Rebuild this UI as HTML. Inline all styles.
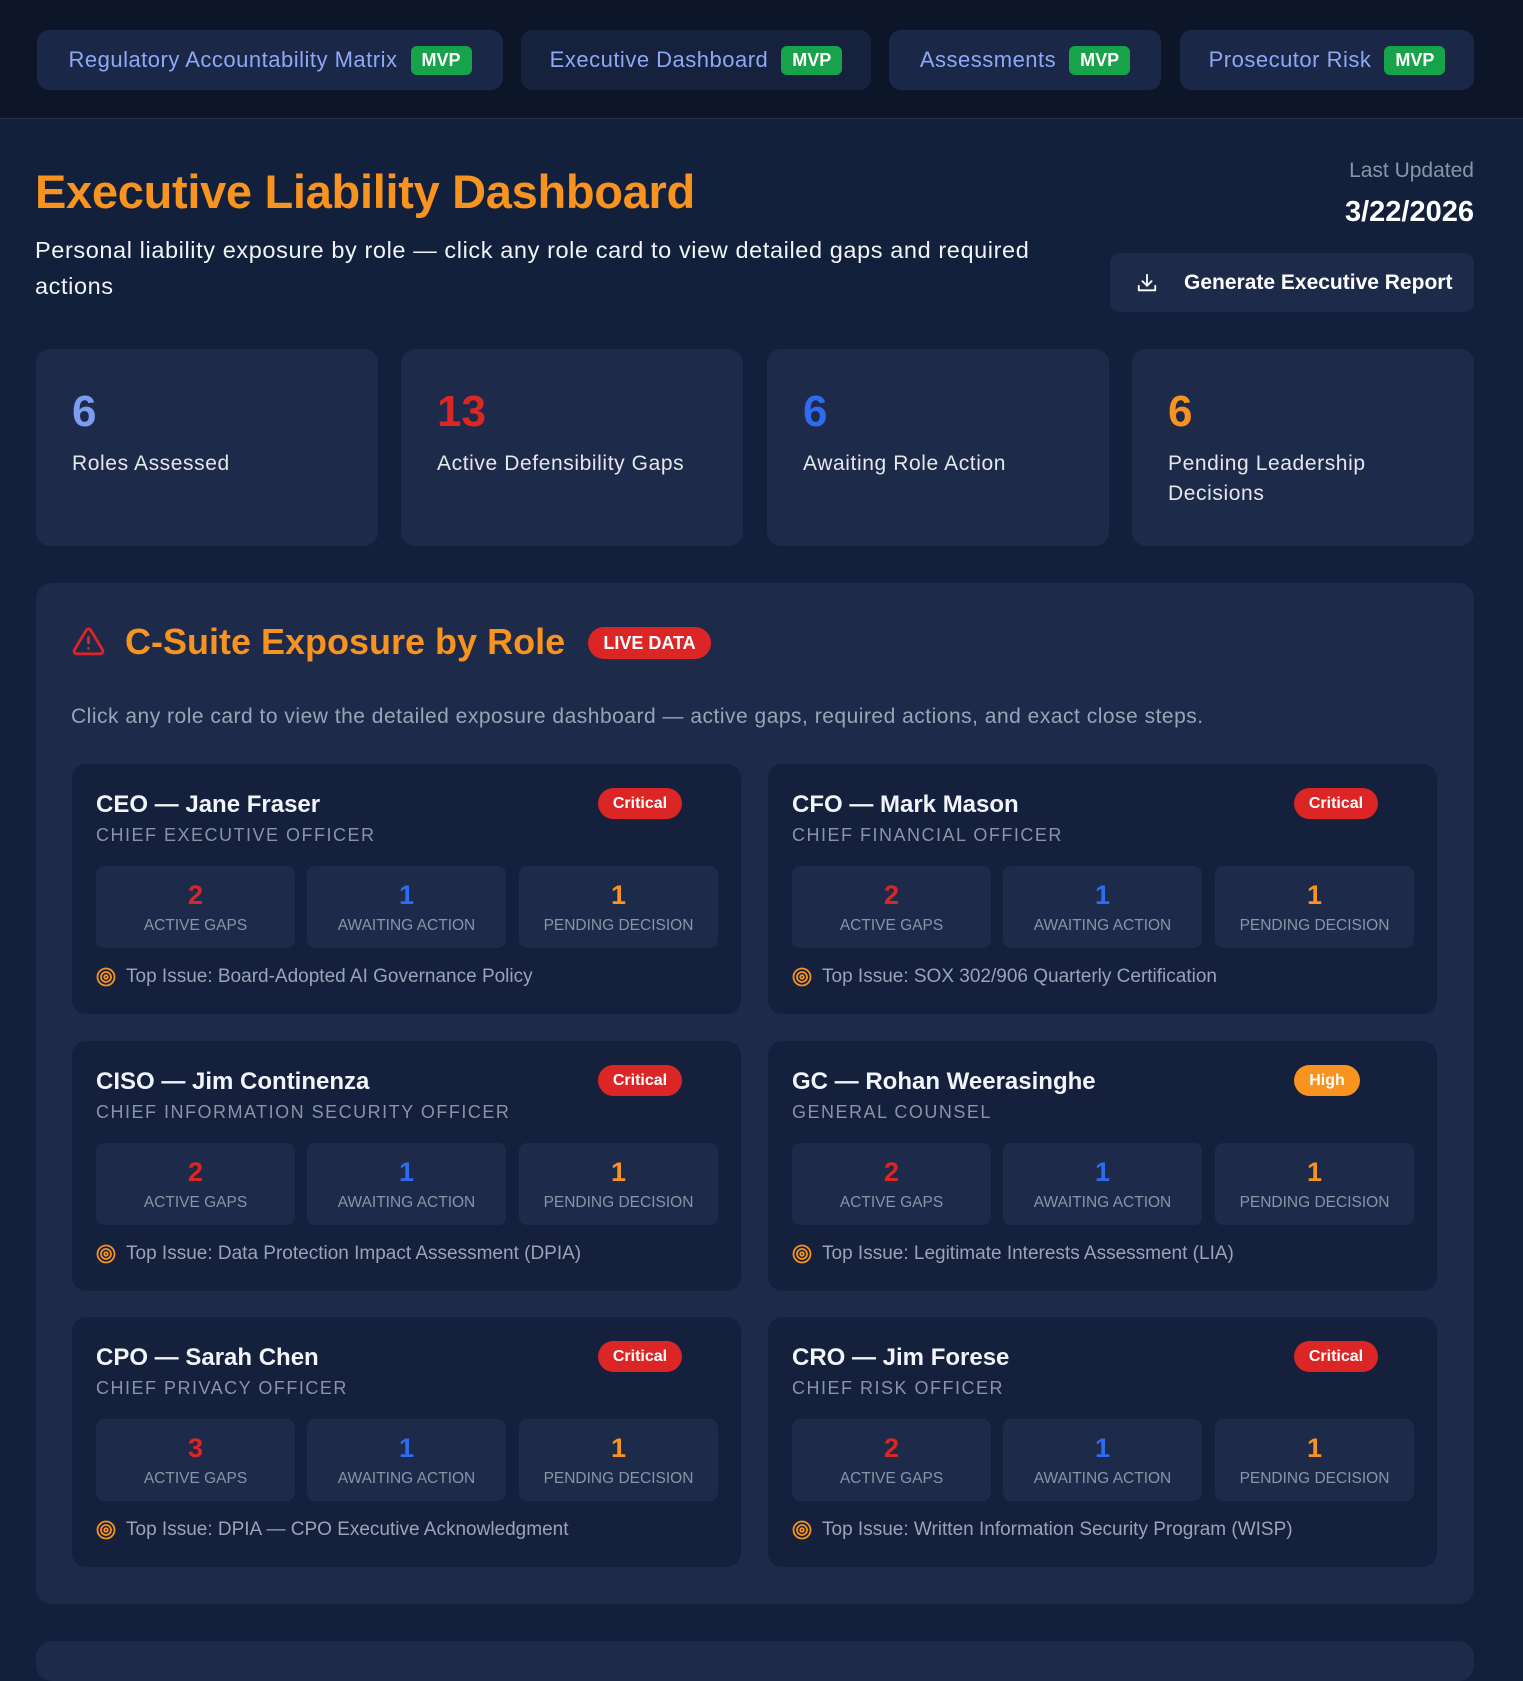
<!DOCTYPE html>
<html><head><meta charset="utf-8">
<style>
*{box-sizing:border-box;margin:0;padding:0}
body{width:1523px;height:1655px;background:#13203b;font-family:"Liberation Sans",sans-serif;position:relative;overflow:hidden;color:#e5e7eb}
.abs{position:absolute}
.hdr{left:0;top:0;width:1523px;height:119px;background:#0d1529;border-bottom:1px solid #253149}
.pill{top:30px;height:60px;border-radius:12px;background:#1b2747;display:flex;align-items:center;justify-content:center;font-size:22px;letter-spacing:0.5px;color:#8fa8f5}
.pill.b{background:#15213d}
.mvp{background:#17a34a;color:#fff;font-weight:bold;font-size:18px;letter-spacing:0;border-radius:6px;padding:4px 11px;margin-left:13px}
.stat{top:349px;height:197px;width:342px;border-radius:14px;background:#1e2a4a}
.stat .n{position:absolute;left:36px;top:38px;font-size:44px;font-weight:bold}
.stat .l{position:absolute;left:36px;top:100px;font-size:21px;letter-spacing:0.6px;color:#e5e7eb;line-height:30px}
.panel{left:36px;top:583px;width:1438px;height:1021px;border-radius:16px;background:#1e2a4a}
.card{width:669px;height:250px;border-radius:14px;background:#14203c}
.card .nm{position:absolute;left:24px;top:27px;font-size:24px;font-weight:bold;color:#f1f5f9}
.card .sub{position:absolute;left:24px;top:61px;font-size:18px;color:#8a94a6;letter-spacing:1.5px}
.card .bd{position:absolute;left:526px;top:24px;width:84px;height:31px;border-radius:16px;background:#dc2626;color:#fff;font-weight:bold;font-size:16px;text-align:center;line-height:31px}
.card .bx{position:absolute;top:102px;width:199px;height:82px;border-radius:8px;background:#1e2a4a;text-align:center}
.bx .v{font-size:27px;font-weight:bold;margin-top:13px;line-height:32px}
.bx .t{font-size:15.5px;color:#8a94a6;margin-top:6px}
.card .ti{position:absolute;left:24px;top:202px;font-size:19px;color:#9aa4b6;display:flex;align-items:center}
.ti svg{margin-right:10px}
</style></head><body>
<div class="abs hdr"></div>
<div class="abs pill" style="left:37px;width:466px">Regulatory Accountability Matrix<span class="mvp">MVP</span></div>
<div class="abs pill b" style="left:521px;width:350px">Executive Dashboard<span class="mvp">MVP</span></div>
<div class="abs pill" style="left:889px;width:272px">Assessments<span class="mvp">MVP</span></div>
<div class="abs pill" style="left:1180px;width:294px">Prosecutor Risk<span class="mvp">MVP</span></div>

<div class="abs" style="left:35px;top:164px;font-size:47px;font-weight:bold;color:#f7931e;letter-spacing:-0.3px">Executive Liability Dashboard</div>
<div class="abs" style="left:35px;top:232px;width:1070px;font-size:23.5px;letter-spacing:0.6px;line-height:36px;color:#f1f5f9">Personal liability exposure by role — click any role card to view detailed gaps and required actions</div>
<div class="abs" style="right:49px;top:159px;font-size:21px;color:#8a94a6">Last Updated</div>
<div class="abs" style="right:49px;top:196px;font-size:29px;font-weight:bold;color:#fff">3/22/2026</div>
<div class="abs" style="left:1110px;top:253px;width:364px;height:59px;border-radius:10px;background:#1e2a4a;display:flex;align-items:center;padding-left:26px;font-size:21px;font-weight:bold;color:#fff">
<svg width="22" height="22" viewBox="0 0 24 24" fill="none" stroke="#fff" stroke-width="2" stroke-linecap="round" stroke-linejoin="round" style="margin-right:26px"><path d="M3 15v5h18v-5"/><path d="M12 3v12"/><path d="M7 10l5 5 5-5"/></svg>Generate Executive Report</div>

<div class="abs stat" style="left:36px"><div class="n" style="color:#7c9cf0">6</div><div class="l">Roles Assessed</div></div>
<div class="abs stat" style="left:401px"><div class="n" style="color:#dc2626">13</div><div class="l">Active Defensibility Gaps</div></div>
<div class="abs stat" style="left:767px"><div class="n" style="color:#2f6bf0">6</div><div class="l">Awaiting Role Action</div></div>
<div class="abs stat" style="left:1132px"><div class="n" style="color:#f7931e">6</div><div class="l">Pending Leadership<br>Decisions</div></div>

<div class="abs panel"></div>
<svg class="abs" style="left:71px;top:625px" width="35" height="33" viewBox="0 0 24 24" fill="none" stroke="#dc2626" stroke-width="2" stroke-linecap="round" stroke-linejoin="round"><path d="M10.3 3.9L1.8 18a2 2 0 0 0 1.7 3h17a2 2 0 0 0 1.7-3L13.7 3.9a2 2 0 0 0-3.4 0z"/><path d="M12 9v4"/><path d="M12 17h.01"/></svg>
<div class="abs" style="left:125px;top:621px;font-size:36px;font-weight:bold;color:#f7931e">C-Suite Exposure by Role</div>
<div class="abs" style="left:588px;top:627px;width:123px;height:32px;border-radius:16px;background:#dc2626;color:#fff;font-weight:bold;font-size:18px;text-align:center;line-height:32px">LIVE DATA</div>
<div class="abs" style="left:71px;top:705px;font-size:21px;letter-spacing:0.5px;color:#9aa4b6">Click any role card to view the detailed exposure dashboard — active gaps, required actions, and exact close steps.</div>

<!-- cards -->
<div class="abs card" style="left:72px;top:764px"><div class="nm">CEO — Jane Fraser</div><div class="sub">CHIEF EXECUTIVE OFFICER</div><div class="bd">Critical</div>
<div class="bx" style="left:24px"><div class="v" style="color:#dc2626">2</div><div class="t">ACTIVE GAPS</div></div>
<div class="bx" style="left:235px"><div class="v" style="color:#2f6bf0">1</div><div class="t">AWAITING ACTION</div></div>
<div class="bx" style="left:447px"><div class="v" style="color:#f7931e">1</div><div class="t">PENDING DECISION</div></div>
<div class="ti"><svg width="20" height="20" viewBox="0 0 20 20" fill="none" stroke="#f7931e" stroke-width="1.8"><circle cx="10" cy="10" r="8.5"/><circle cx="10" cy="10" r="5"/><circle cx="10" cy="10" r="1.8"/></svg>Top Issue: Board-Adopted AI Governance Policy</div></div>

<div class="abs card" style="left:768px;top:764px"><div class="nm">CFO — Mark Mason</div><div class="sub">CHIEF FINANCIAL OFFICER</div><div class="bd">Critical</div>
<div class="bx" style="left:24px"><div class="v" style="color:#dc2626">2</div><div class="t">ACTIVE GAPS</div></div>
<div class="bx" style="left:235px"><div class="v" style="color:#2f6bf0">1</div><div class="t">AWAITING ACTION</div></div>
<div class="bx" style="left:447px"><div class="v" style="color:#f7931e">1</div><div class="t">PENDING DECISION</div></div>
<div class="ti"><svg width="20" height="20" viewBox="0 0 20 20" fill="none" stroke="#f7931e" stroke-width="1.8"><circle cx="10" cy="10" r="8.5"/><circle cx="10" cy="10" r="5"/><circle cx="10" cy="10" r="1.8"/></svg>Top Issue: SOX 302/906 Quarterly Certification</div></div>

<div class="abs card" style="left:72px;top:1041px"><div class="nm">CISO — Jim Continenza</div><div class="sub">CHIEF INFORMATION SECURITY OFFICER</div><div class="bd">Critical</div>
<div class="bx" style="left:24px"><div class="v" style="color:#dc2626">2</div><div class="t">ACTIVE GAPS</div></div>
<div class="bx" style="left:235px"><div class="v" style="color:#2f6bf0">1</div><div class="t">AWAITING ACTION</div></div>
<div class="bx" style="left:447px"><div class="v" style="color:#f7931e">1</div><div class="t">PENDING DECISION</div></div>
<div class="ti"><svg width="20" height="20" viewBox="0 0 20 20" fill="none" stroke="#f7931e" stroke-width="1.8"><circle cx="10" cy="10" r="8.5"/><circle cx="10" cy="10" r="5"/><circle cx="10" cy="10" r="1.8"/></svg>Top Issue: Data Protection Impact Assessment (DPIA)</div></div>

<div class="abs card" style="left:768px;top:1041px"><div class="nm">GC — Rohan Weerasinghe</div><div class="sub">GENERAL COUNSEL</div><div class="bd" style="background:#f7931e;width:66px">High</div>
<div class="bx" style="left:24px"><div class="v" style="color:#dc2626">2</div><div class="t">ACTIVE GAPS</div></div>
<div class="bx" style="left:235px"><div class="v" style="color:#2f6bf0">1</div><div class="t">AWAITING ACTION</div></div>
<div class="bx" style="left:447px"><div class="v" style="color:#f7931e">1</div><div class="t">PENDING DECISION</div></div>
<div class="ti"><svg width="20" height="20" viewBox="0 0 20 20" fill="none" stroke="#f7931e" stroke-width="1.8"><circle cx="10" cy="10" r="8.5"/><circle cx="10" cy="10" r="5"/><circle cx="10" cy="10" r="1.8"/></svg>Top Issue: Legitimate Interests Assessment (LIA)</div></div>

<div class="abs card" style="left:72px;top:1317px"><div class="nm">CPO — Sarah Chen</div><div class="sub">CHIEF PRIVACY OFFICER</div><div class="bd">Critical</div>
<div class="bx" style="left:24px"><div class="v" style="color:#dc2626">3</div><div class="t">ACTIVE GAPS</div></div>
<div class="bx" style="left:235px"><div class="v" style="color:#2f6bf0">1</div><div class="t">AWAITING ACTION</div></div>
<div class="bx" style="left:447px"><div class="v" style="color:#f7931e">1</div><div class="t">PENDING DECISION</div></div>
<div class="ti"><svg width="20" height="20" viewBox="0 0 20 20" fill="none" stroke="#f7931e" stroke-width="1.8"><circle cx="10" cy="10" r="8.5"/><circle cx="10" cy="10" r="5"/><circle cx="10" cy="10" r="1.8"/></svg>Top Issue: DPIA — CPO Executive Acknowledgment</div></div>

<div class="abs card" style="left:768px;top:1317px"><div class="nm">CRO — Jim Forese</div><div class="sub">CHIEF RISK OFFICER</div><div class="bd">Critical</div>
<div class="bx" style="left:24px"><div class="v" style="color:#dc2626">2</div><div class="t">ACTIVE GAPS</div></div>
<div class="bx" style="left:235px"><div class="v" style="color:#2f6bf0">1</div><div class="t">AWAITING ACTION</div></div>
<div class="bx" style="left:447px"><div class="v" style="color:#f7931e">1</div><div class="t">PENDING DECISION</div></div>
<div class="ti"><svg width="20" height="20" viewBox="0 0 20 20" fill="none" stroke="#f7931e" stroke-width="1.8"><circle cx="10" cy="10" r="8.5"/><circle cx="10" cy="10" r="5"/><circle cx="10" cy="10" r="1.8"/></svg>Top Issue: Written Information Security Program (WISP)</div></div>

<div class="abs" style="left:36px;top:1641px;width:1438px;height:40px;border-radius:16px;background:#1e2a4a"></div>
</body></html>
